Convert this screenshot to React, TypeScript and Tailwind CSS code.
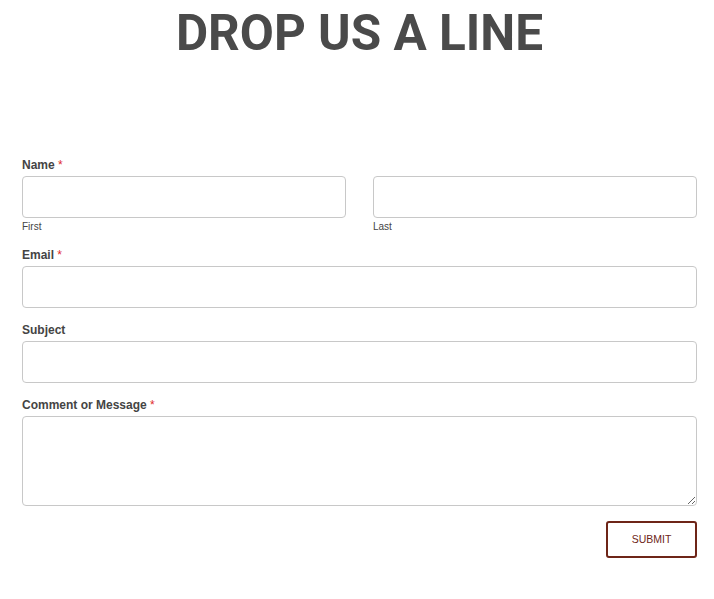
import React from "react";

const labelCls =
  "block text-[12px] leading-[15px] font-bold text-[#444444] mb-[3px]";
const inputCls =
  "block w-full h-[42px] border border-[#c8c8c8] rounded-[4px] bg-white";

function Req() {
  return <span className="text-[#e02b2b] font-normal"> *</span>;
}

export default function App() {
  return (
    <div
      className="w-[714px] min-h-[599px] bg-white pl-[22px] pr-[17px]"
      style={{ fontFamily: "Arial, 'Liberation Sans', sans-serif" }}
    >
      <h1
        className="pt-[8px] text-center text-[49.5px] leading-[50px] font-bold text-[#4a4a4a]"
        style={{ fontFamily: "Roboto, 'Liberation Sans', sans-serif" }}
      >
        DROP US A LINE
      </h1>
      <form className="pt-[100px]" onSubmit={(e) => e.preventDefault()}>
        <div>
          <label className={labelCls}>
            Name
            <Req />
          </label>
          <div className="flex gap-[27px]">
            <div className="flex-1">
              <input className={inputCls} />
              <div className="mt-[3px] text-[10px] leading-[12px] text-[#444444]">First</div>
            </div>
            <div className="flex-1">
              <input className={inputCls} />
              <div className="mt-[3px] text-[10px] leading-[12px] text-[#444444]">Last</div>
            </div>
          </div>
        </div>
        <div className="mt-[15px]">
          <label className={labelCls}>
            Email
            <Req />
          </label>
          <input className={inputCls} />
        </div>
        <div className="mt-[15px]">
          <label className={labelCls}>Subject</label>
          <input className={inputCls} />
        </div>
        <div className="mt-[15px]">
          <label className={labelCls}>
            Comment or Message
            <Req />
          </label>
          <textarea className="block w-full h-[90px] border border-[#c8c8c8] rounded-[4px] bg-white resize-y" />
        </div>
        <div className="mt-[15px] flex justify-end">
          <button
            type="submit"
            className="w-[91px] h-[37px] border-2 border-[#6e2518] rounded-[3px] bg-white text-[10.5px] text-[#6e2518]"
          >
            SUBMIT
          </button>
        </div>
      </form>
    </div>
  );
}
